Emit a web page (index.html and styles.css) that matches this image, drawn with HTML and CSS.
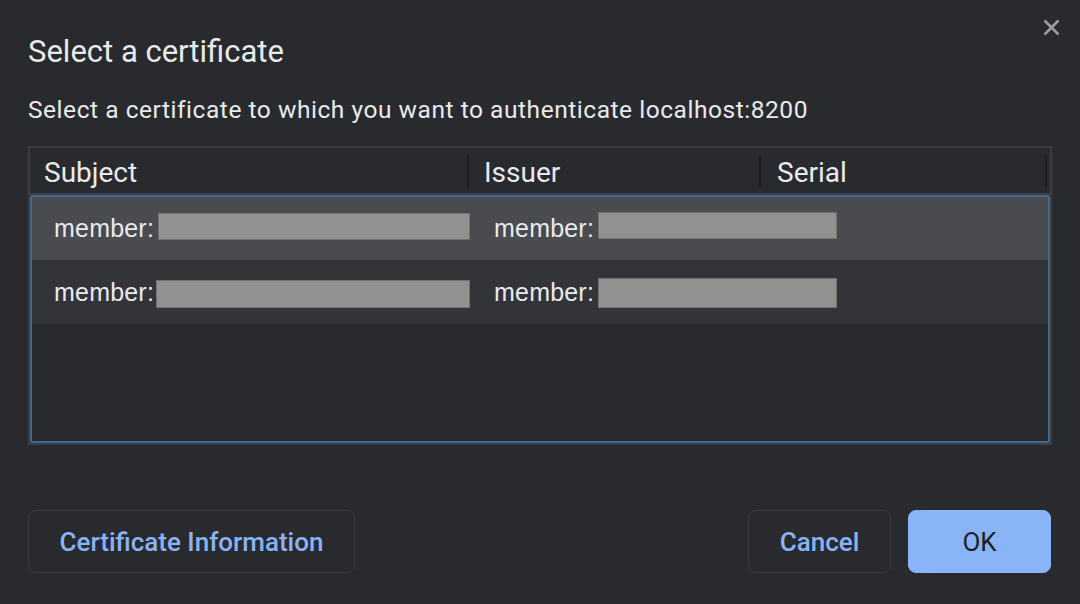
FILE: index.html
```html
<!DOCTYPE html>
<html lang="en">
<head>
<meta charset="utf-8">
<title>Select a certificate</title>
<link rel="stylesheet" href="styles.css">
</head>
<body>
<div class="dialog">
  <div class="head">
    <h1 class="title">Select a certificate</h1>
    <button class="close" aria-label="Close">
      <svg viewBox="0 0 17 17" width="17" height="17"><path d="M1.5 1.5 L15.5 15.5 M15.5 1.5 L1.5 15.5" stroke="#9a9ca0" stroke-width="2.6" stroke-linecap="butt" fill="none"/></svg>
    </button>
  </div>
  <p class="subtitle">Select a certificate to which you want to authenticate localhost:8200</p>
  <div class="table">
    <div class="thead">
      <div class="th th-subject">Subject</div>
      <div class="th th-issuer">Issuer</div>
      <div class="th th-serial">Serial</div>
    </div>
    <div class="tbody">
      <div class="row row-selected">
        <div class="cell cell-subject"><span class="label">member:</span><span class="redact redact-s1"></span></div>
        <div class="cell cell-issuer"><span class="label">member:</span><span class="redact redact-i1"></span></div>
        <div class="cell cell-serial"></div>
      </div>
      <div class="row row-plain">
        <div class="cell cell-subject"><span class="label">member:</span><span class="redact redact-s2"></span></div>
        <div class="cell cell-issuer"><span class="label">member:</span><span class="redact redact-i2"></span></div>
        <div class="cell cell-serial"></div>
      </div>
    </div>
  </div>
  <div class="actions">
    <button class="btn btn-secondary btn-info">Certificate Information</button>
    <div class="actions-right">
      <button class="btn btn-secondary btn-cancel">Cancel</button>
      <button class="btn btn-primary btn-ok">OK</button>
    </div>
  </div>
</div>
</body>
</html>
```
FILE: styles.css
```css
* { box-sizing: border-box; }

html, body {
  margin: 0;
  padding: 0;
  background: #292a2d;
}

body {
  width: 1080px;
  height: 604px;
  overflow: hidden;
  font-family: Roboto, "Liberation Sans", sans-serif;
  color: #e8eaed;
}

.dialog {
  display: flex;
  flex-direction: column;
  padding: 0 28px;
  height: 604px;
}

.head {
  display: flex;
  justify-content: space-between;
  align-items: flex-start;
}

.title {
  margin: 32px 0 0 0;
  font-size: 31px;
  font-weight: 400;
  line-height: 40px;
  color: #e8eaed;
}

.close {
  margin: 19px -8px 0 0;
  padding: 0;
  width: 17px;
  height: 17px;
  border: 0;
  background: transparent;
  display: flex;
}

.subtitle {
  margin: 23px 0 0 0;
  font-size: 24.5px;
  letter-spacing: 0.54px;
  line-height: 30px;
  color: #e8eaed;
}

.table {
  margin-top: 21px;
  height: 299px;
  border: 2px solid #3c3d40;
  display: flex;
  flex-direction: column;
}

.thead {
  display: flex;
  height: 47px;
  padding: 7px 0 6px 0;
  border-bottom: 2px solid #3c3d40;
}

.th {
  height: 32px;
  line-height: 35px;
  font-size: 28px;
  border-right: 2px solid #1c1d20;
  white-space: nowrap;
}

.th-subject { width: 439px; padding-left: 14px; }
.th-issuer { width: 292px; padding-left: 15px; }
.th-serial { width: 286px; padding-left: 16px; }

.tbody {
  flex: 1;
  border: 2px solid #3d6a94;
  border-radius: 3px;
  overflow: hidden;
}

.row {
  display: flex;
  align-items: center;
  height: 63px;
}

.row-selected { background: #4a4b4f; }
.row-plain { background: #333438; height: 64px; }

.cell {
  display: flex;
  align-items: center;
  padding-left: 22px;
  font-family: "Liberation Sans", Arial, sans-serif;
  font-size: 25px;
  letter-spacing: 0.2px;
  color: #e8eaed;
  white-space: nowrap;
}

.cell-subject { width: 440px; }
.cell-issuer { width: 400px; }

.redact {
  display: inline-block;
  background: #919191;
  border: 1px solid #727272;
}

.redact-s1 { width: 312px; height: 27px; margin-left: 4px; margin-top: -4px; }
.redact-i1 { width: 239px; height: 27px; margin-left: 4px; margin-top: -6px; }
.redact-s2 { width: 314px; height: 28px; margin-left: 2px; margin-top: 3px; }
.redact-i2 { width: 239px; height: 30px; margin-left: 4px; margin-top: 1px; }

.actions {
  margin-top: 65px;
  display: flex;
  justify-content: space-between;
}

.actions-right {
  display: flex;
  gap: 17px;
  margin-right: 1px;
}

.btn {
  height: 63px;
  border-radius: 8px;
  font-family: Roboto, "Liberation Sans", sans-serif;
  font-size: 26px;
  font-weight: 500;
  padding: 0;
  cursor: pointer;
}

.btn-secondary {
  background: transparent;
  border: 1px solid #3c3d41;
  color: #8ab4f8;
}

.btn-primary {
  background: #8ab4f8;
  border: 1px solid #8ab4f8;
  color: #202124;
  font-weight: 400;
}

.btn-info { width: 327px; }
.btn-cancel { width: 143px; }
.btn-ok { width: 143px; }
```
